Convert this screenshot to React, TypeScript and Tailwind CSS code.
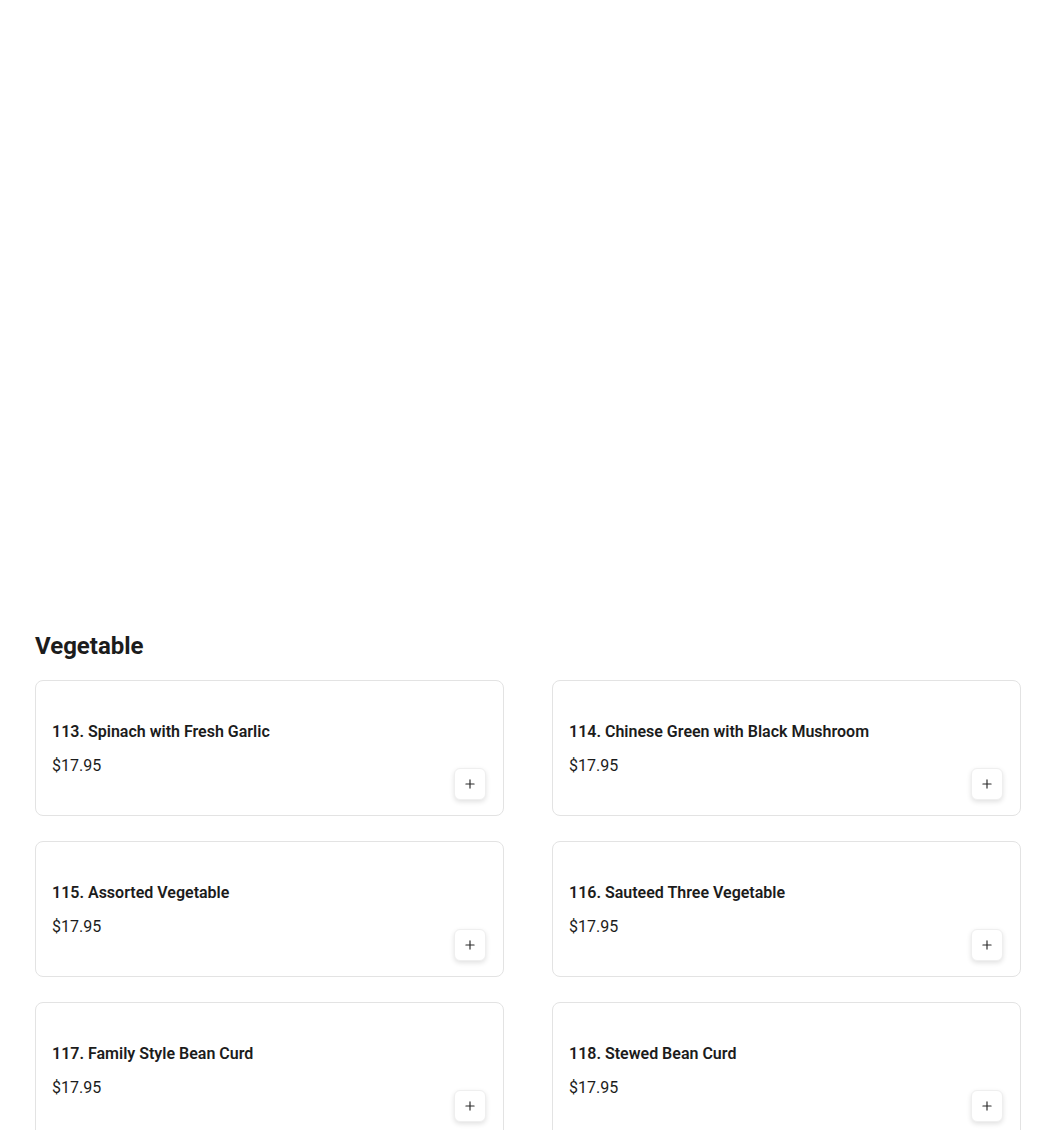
import { Plus } from "lucide-react";

const ITEMS = [
  { no: 113, name: "Spinach with Fresh Garlic", price: "$17.95" },
  { no: 114, name: "Chinese Green with Black Mushroom", price: "$17.95" },
  { no: 115, name: "Assorted Vegetable", price: "$17.95" },
  { no: 116, name: "Sauteed Three Vegetable", price: "$17.95" },
  { no: 117, name: "Family Style Bean Curd", price: "$17.95" },
  { no: 118, name: "Stewed Bean Curd", price: "$17.95" },
];

function ItemCard({ no, name, price }: { no: number; name: string; price: string }) {
  return (
    <div className="flex h-[136px] justify-between rounded-lg border border-[#e3e3e3] bg-white pb-[15px] pl-4 pr-[17px] pt-[39px]">
      <div className="self-start">
        <div className="text-base font-semibold leading-6 text-[#1c1c1c]">
          {no}. {name}
        </div>
        <div className="mt-[10px] text-base leading-6 text-[#1c1c1c]">{price}</div>
      </div>
      <button className="flex h-8 w-8 items-center justify-center self-end rounded-md border border-[#efefef] bg-white shadow-[0_2px_5px_rgba(0,0,0,0.12)]">
        <Plus className="h-[14px] w-[14px] text-[#2a2a2a]" strokeWidth={2} />
      </button>
    </div>
  );
}

export default function App() {
  return (
    <div className="min-h-[1130px] bg-white font-['Roboto',sans-serif]">
      {/* space above the section */}
      <div className="h-[630px]" />

      <section className="ml-[35px] w-[986px]">
        <h2 className="mb-[18px] text-2xl font-bold leading-8 text-[#1c1c1c]">Vegetable</h2>
        <div className="grid grid-cols-2 gap-x-[48px] gap-y-[25px]">
          {ITEMS.map((it) => (
            <ItemCard key={it.no} {...it} />
          ))}
        </div>
      </section>
    </div>
  );
}
